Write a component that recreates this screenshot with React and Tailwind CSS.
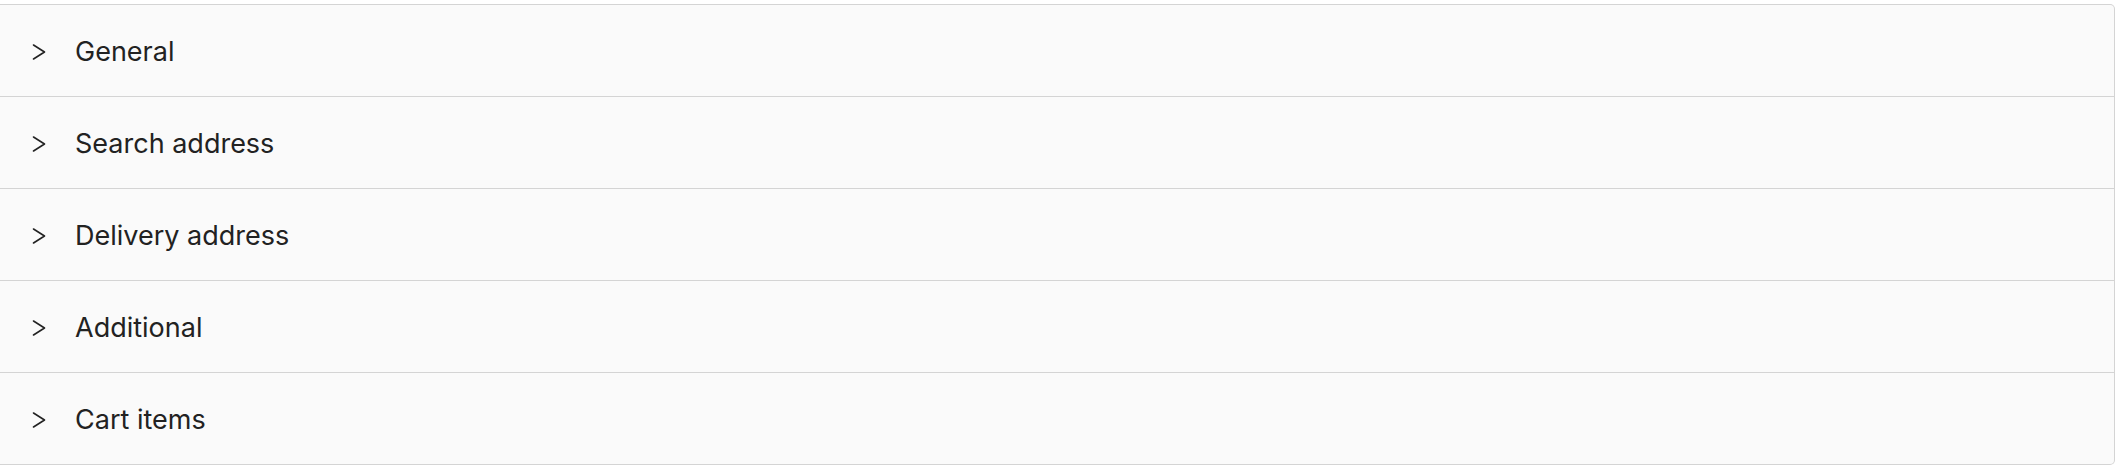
export default function App() {
  const items = ["General", "Search address", "Delivery address", "Additional", "Cart items"];
  return (
    <div className="w-[2116px] h-[466px] bg-white pt-[4px]" style={{ fontFamily: "Inter, 'Noto Sans', sans-serif" }}>
      <div className="w-[2115px] bg-[#fafafa] border-t border-r border-b border-[#d4d4d4] rounded-tr-[5px] rounded-br-[5px]">
        {items.map((t, i) => (
          <div key={t} className={`flex items-center ${i < items.length - 1 ? "border-b border-[#d4d4d4] h-[92px]" : "h-[91px]"}`}>
            <div className="pl-[31px] w-[75px] flex items-center pt-[2px]">
              <svg width="16" height="18" viewBox="0 0 16 18" fill="none" stroke="#222" strokeWidth="1.6" strokeLinecap="round" strokeLinejoin="round">
                <path d="M2.5 2 L13.5 9 L2.5 16" />
              </svg>
            </div>
            <span className="text-[27px] text-[#222] leading-none pt-[2px]">{t}</span>
          </div>
        ))}
      </div>
    </div>
  );
}
